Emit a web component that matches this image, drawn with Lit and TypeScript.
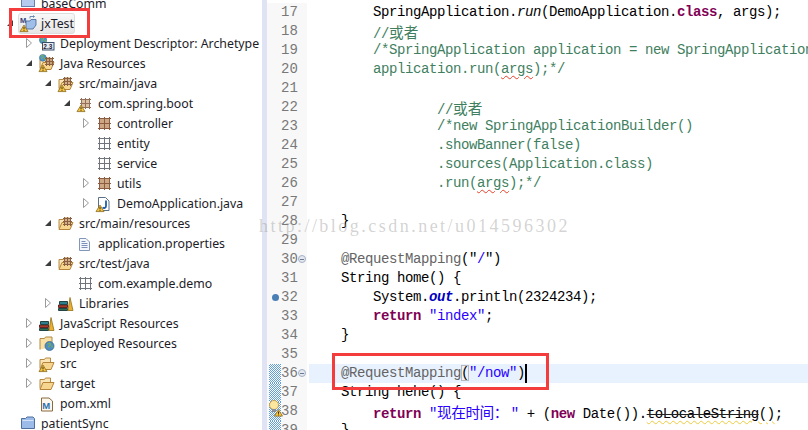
import { LitElement, html, css, svg, nothing } from "lit";
import { customElement } from "lit/decorators.js";

const warn = svg`<g transform="translate(-1.5,.6)"><path d="M4.500 9.500 L8.500 16 H0.500 Z" fill="#f5c542" stroke="#8a6a1c" stroke-width=".8" stroke-linejoin="round"/><path d="M4.500 11.500v2.200M4.500 14.400v.8" stroke="#3a2a10" stroke-width="1"/></g>`;
const grid = (x: number, y: number, s: number, fill: string, line: string) => svg`<rect x="${x}" y="${y}" width="${s}" height="${s}" fill="${fill}"/><path d="M${x - 1} ${y + .5}H${x + s + 1}M${x - 1} ${y + s / 2}H${x + s + 1}M${x - 1} ${y + s - .5}H${x + s + 1}M${x + .5} ${y - 1}V${y + s + 1}M${x + s / 2} ${y - 1}V${y + s + 1}M${x + s - .5} ${y - 1}V${y + s + 1}" stroke="${line}" fill="none"/>`;
const openFolder = svg`<g transform="translate(-1.500,0)"><path d="M1.500 13.500V4.500H6L7 3H12V7" fill="#f8e4b4" stroke="#b58a45"/><path d="M1.500 14.500 L4.500 7.500H15.500L12.500 14.500Z" fill="#f6d58f" stroke="#b5843b" stroke-linejoin="round"/></g>`;
const globe = svg`<circle cx="4.500" cy="4.500" r="4" fill="#4d94c8" stroke="#3d6f8f" stroke-width=".7"/><path d="M2 3c1-2 3-2 3 0s-2 1-2 3M6 5c1 0 2 0 1.500 2" stroke="#7cb35a" stroke-width="1.300" fill="none"/>`;
const books = svg`<path d="M1 13.500H10V15.500H1Z" fill="#2f6f4f" stroke="#244"/><path d="M1 10H10V12.500H1Z" fill="#a33d2a" stroke="#622"/><path d="M2 6.500H10V9.500H2Z" fill="#2d7f8f" stroke="#244"/><path d="M10.500 15.500 L12.500 2.500 L15.500 15.500Z" fill="#eab02f" stroke="#94701a" stroke-width=".8"/>`;

const icons: Record<string, unknown> = {
  project: svg`<g transform="translate(-1,0)"><path d="M1.500 13.500V3.500H5.500L7 2H13L14.500 3.500V13.500Z" fill="#9dbbe8" stroke="#4f6f9f"/><path d="M2.500 5.500H13.500" stroke="#d6e3f7"/></g>`,
  base: svg`<rect x=".5" y="-2.500" width="13" height="14" fill="#b5caec" stroke="#6681ad"/>`,
  maven: svg`<path d="M5 6H9L10 4.500H15V10L12 14H5Z" fill="#9fbfe8" stroke="#4f6f9f" stroke-width=".9"/><path d="M9 3.500V1.500H13M12 .5l1.500 1-1.500 1" stroke="#5b7fb0" fill="none" stroke-width=".9"/><text x="-1" y="7.500" font-family="Liberation Sans" font-size="7.500" font-weight="700" fill="#33437a">M</text>${warn}`,
  descriptor: svg`<g transform="translate(-1,1) scale(.9)">${globe}</g><rect x="2.500" y="7.500" width="11.500" height="7.500" fill="#e8edf5" stroke="#3d4f68"/><text x="3.300" y="13.700" font-family="Liberation Sans" font-size="6.500" font-weight="700" fill="#223">2.3</text>`,
  javaRes: svg`${openFolder}<g transform="translate(-1,-1) scale(.85)">${globe}</g>${grid(6, 3, 7, "#c9a27e", "#8a6040")}${warn}`,
  srcPkg: svg`${openFolder}${grid(5, 3, 7, "#d2ae8a", "#8a6040")}${warn}`,
  folderPkg: svg`${openFolder}${grid(5, 3, 7, "#d2ae8a", "#8a6040")}`,
  pkgWarn: svg`${grid(3, 4, 9, "#dcc0a4", "#94705a")}${warn}`,
  pkg: svg`${grid(2, 3, 11, "#cda684", "#8a5c42")}`,
  pkgEmpty: svg`${grid(2, 3, 11, "#ffffff", "#70757d")}`,
  java: svg`<path d="M1.500 2.500H8.500L12 6V15.500H1.500Z" fill="#fff" stroke="#5a7186"/><path d="M9 5.500V11c0 2-2 2.500-3.500 1.500" stroke="#1f5fa8" stroke-width="1.800" fill="none"/>${warn}`,
  props: svg`<path d="M1.500 3.500H8L11.500 7V15.500H1.500Z" fill="#f4f7fc" stroke="#8396b8"/><path d="M3.500 6.500H7.500M3.500 8.500H9.500M3.500 10.500H9.500M3.500 12.500H9.500" stroke="#7d90b8"/>`,
  libs: svg`<g transform="translate(-1.500,0)">${books}</g>`,
  deployed: svg`<g transform="translate(-1.500,0)"><path d="M1.500 14.500V3.500H6L7 2H13.500V13H9" fill="#f8e0a6" stroke="#b18a46"/><circle cx="11" cy="11" r="4.500" fill="#4d8fc4" stroke="#38607f" stroke-width=".7"/><path d="M9 9c1.500-1 3-1 3 .5s-2.500 1-2 3M13 11l1.500 1" stroke="#77ad55" stroke-width="1.200" fill="none"/></g>`,
  srcFolder: svg`${openFolder}${warn}`,
  folder: openFolder,
  pom: svg`<g transform="translate(-1,0)"><path d="M2.500 3H10L13.500 6V16H2.500Z" fill="#fbf7ee" stroke="#8a6b3c"/><text x="3.200" y="14" font-family="Liberation Sans" font-size="9.500" font-weight="700" fill="#2f6fae">M</text></g>`,
};

type Node = [number, string, "o" | "c" | "", string];
const tree: Node[] = [
  [0, "base", "", "baseComm"],
  [0, "maven", "o", "jxTest"],
  [1, "descriptor", "c", "Deployment Descriptor: Archetype"],
  [1, "javaRes", "o", "Java Resources"],
  [2, "srcPkg", "o", "src/main/java"],
  [3, "pkgWarn", "o", "com.spring.boot"],
  [4, "pkg", "c", "controller"],
  [4, "pkgEmpty", "", "entity"],
  [4, "pkgEmpty", "", "service"],
  [4, "pkg", "c", "utils"],
  [4, "java", "c", "DemoApplication.java"],
  [2, "folderPkg", "o", "src/main/resources"],
  [3, "props", "", "application.properties"],
  [2, "folderPkg", "o", "src/test/java"],
  [3, "pkgEmpty", "", "com.example.demo"],
  [2, "libs", "c", "Libraries"],
  [1, "libs", "c", "JavaScript Resources"],
  [1, "deployed", "c", "Deployed Resources"],
  [1, "srcFolder", "c", "src"],
  [1, "folder", "c", "target"],
  [1, "pom", "", "pom.xml"],
  [0, "project", "", "patientSync"],
];

const c = (t: string) => html`<span class="cm">${t}</span>`;
const kw = (t: string) => html`<span class="kw">${t}</span>`;
const st = (t: string) => html`<span class="st">${t}</span>`;
const an = (t: string) => html`<span class="an">${t}</span>`;
const sq = html`<span class="sq">args</span>`;

const code: Array<[number, unknown, string?]> = [
  [17, html`        SpringApplication.<i>run</i>(DemoApplication.${kw("class")}, args);`],
  [18, html`        ${c("//")}<span class="cm cjk">或者</span>`],
  [19, html`        ${c("/*SpringApplication application = new SpringApplicationBuilder()")}`],
  [20, html`        <span class="cm">application.run(${sq});*/</span>`],
  [21, ""],
  [22, html`                ${c("//")}<span class="cm cjk">或者</span>`],
  [23, html`                ${c("/*new SpringApplicationBuilder()")}`],
  [24, html`                ${c(".showBanner(false)")}`],
  [25, html`                ${c(".sources(Application.class)")}`],
  [26, html`                <span class="cm">.run(${sq});*/</span>`],
  [27, ""],
  [28, html`    }`],
  [29, ""],
  [30, html`    ${an("@RequestMapping")}("${st("/")}")`, "fold"],
  [31, html`    String home() {`],
  [32, html`        System.<b class="fd">out</b>.println(2324234);`, "bp"],
  [33, html`        ${kw("return")} ${st('"index"')};`],
  [34, html`    }`],
  [35, ""],
  [36, html`    ${an("@RequestMapping")}<span class="br">(</span>${st('"/now"')})<span class="caret"></span>`, "cur"],
  [37, html`    String hehe() {`, "mark"],
  [38, html`        ${kw("return")} <span class="st">"<span class="cjk tight">现在时间： </span>"</span> + (${kw("new")} Date()).<span class="dep"><span class="strike">toLocaleString</span>()</span>;`, "bulb"],
  [39, html`    }`, "mark"],
];

@customElement("app-root")
export class AppRoot extends LitElement {
  static styles = css`
    :host { display: block; width: 808px; height: 430px; overflow: hidden; background: #fff; position: relative; }
    .shell { display: flex; height: 430px; overflow: hidden; }
    .tree { width: 262px; flex: none; overflow: hidden; font: 12.3px "Noto Sans", sans-serif; color: #1c1c28; }
    .list { margin-top: -7px; }
    .row { display: flex; align-items: center; height: 20px; white-space: nowrap; }
    .tw { width: 10px; height: 10px; flex: none; margin-right: 6px; }
    .tw svg, .ic { display: block; }
    .ic { width: 16px; height: 16px; flex: none; margin-right: 4px; overflow: visible; }
    .sel { display: flex; align-items: center; height: 19px; margin: 0 0 0 -3px; padding-left: 3px; width: 52px; border: 1px solid #dcdcdc; border-radius: 3px; background: linear-gradient(#f8f8f8, #e6e6e6); }
    .sel .ic { margin-left: -1px; }
    .sash { width: 5px; flex: none; background: #dfe3f3; }
    .editor { flex: 1; min-width: 0; overflow: hidden; margin-top: 3px; font: 14px/19px "Liberation Mono", monospace; letter-spacing: -.4px; color: #000; }
    .line { display: flex; height: 19px; white-space: pre; }
    .ruler { width: 14px; flex: none; background: #f8f8f8; display: flex; justify-content: flex-end; }
    .ann { width: 12px; height: 19px; position: relative; display: flex; align-items: center; justify-content: center; }
    .mark .ann, .bulb .ann, .cur .ann { background: repeating-conic-gradient(#5f9ed8 0 25%, #fff 0 50%) 0 0 / 2px 2px; }
    .dot { width: 7px; height: 7px; border-radius: 50%; background: #4a7fb5; }
    .num { width: 26px; flex: none; background: #f8f8f8; color: #787878; position: relative; letter-spacing: 0; }
    .num .f { position: absolute; right: 1px; top: 5px; width: 8px; height: 8px; border-radius: 50%; background: #e4e8f0; border: 1px solid #a4b0c4; box-sizing: border-box; }
    .num .f::after { content: ""; position: absolute; left: 1px; right: 1px; top: 2.500px; height: 1px; background: #6c7a90; }
    .gap { width: 2px; flex: none; }
    .txt { flex: 1; }
    .cur .txt { background: #e8f2fe; }
    .cm { color: #3f7f5f; }
    .kw { color: #7f0055; font-weight: 700; }
    .st { color: #2a00ff; }
    .an { color: #646464; }
    .fd { color: #0000c0; font-weight: 700; font-style: italic; }
    .cjk { font-family: "Noto Sans CJK SC", sans-serif; font-size: 14.670px; letter-spacing: 0; }
    .tight { letter-spacing: -.5px; }
    .sq { text-decoration: underline wavy #e8402a 1px; text-underline-offset: 2px; }
    .dep { text-decoration: underline wavy #eccb3e 1px; text-underline-offset: 2px; }
    .strike { text-decoration: line-through #222 1px; }
    .br { outline: 1px solid #b8b8b8; outline-offset: -1px; background: #eef2f8; }
    .caret { display: inline-block; width: 2px; height: 19px; background: #000; vertical-align: top; }
    .box { position: absolute; border: 3px solid #f53c3c; box-sizing: border-box; pointer-events: none; }
    .b1 { left: 9px; top: 8px; width: 81px; height: 30px; }
    .b2 { left: 332px; top: 353px; width: 217px; height: 37px; }
    .mk { position: absolute; left: 267px; top: 399px; overflow: visible; }
    .wm { position: absolute; left: 259px; top: 215px; font: 18px/22px "Liberation Serif", serif; letter-spacing: 2.480px; color: rgba(150, 150, 150, .42); white-space: nowrap; pointer-events: none; }
  `;

  private twisty(k: string) {
    if (k === "c") return html`<svg class="tw" viewBox="0 0 10 10"><path d="M2.500 .5L7.500 5L2.500 9.500Z" fill="#fff" stroke="#9a9a9a"/></svg>`;
    if (k === "o") return html`<svg class="tw" viewBox="0 0 10 10"><path d="M8 2V8H2Z" fill="#3c3c3c"/></svg>`;
    return html`<span class="tw"></span>`;
  }

  private icon(name: string) {
    return html`<svg class="ic" viewBox="0 0 16 16">${icons[name]}</svg>`;
  }

  render() {
    return html`
      <div class="shell">
        <div class="tree"><div class="list">
          ${tree.map(([d, ic, tw, label]) => html`
            <div class="row" style="padding-left:${5 + 19 * d}px">
              ${this.twisty(tw)}
              ${label === "jxTest"
                ? html`<span class="sel">${this.icon(ic)}${label}</span>`
                : html`${this.icon(ic)}${label}`}
            </div>`)}
        </div></div>
        <div class="sash"></div>
        <div class="editor">
          ${code.map(([n, body, flag]) => html`
            <div class="line ${flag ?? ""}">
              <div class="ruler"><div class="ann">${flag === "bp" ? html`<span class="dot"></span>` : nothing}</div></div>
              <div class="num">${n}${flag === "fold" || flag === "cur" ? html`<span class="f"></span>` : nothing}</div>
              <div class="gap"></div>
              <div class="txt">${body}</div>
            </div>`)}
        </div>
      </div>
      <svg class="mk" width="16" height="18" viewBox="0 0 16 18">
        <circle cx="7" cy="6" r="4.500" fill="#fbe7a0" stroke="#c9a24a"/><rect x="5" y="10" width="4" height="3" fill="#8a8f98"/>
        <g transform="translate(8.500,.5)">${warn}</g>
      </svg>
      <div class="box b1"></div>
      <div class="box b2"></div>
      <div class="wm">http://blog.csdn.net/u014596302</div>
    `;
  }
}
